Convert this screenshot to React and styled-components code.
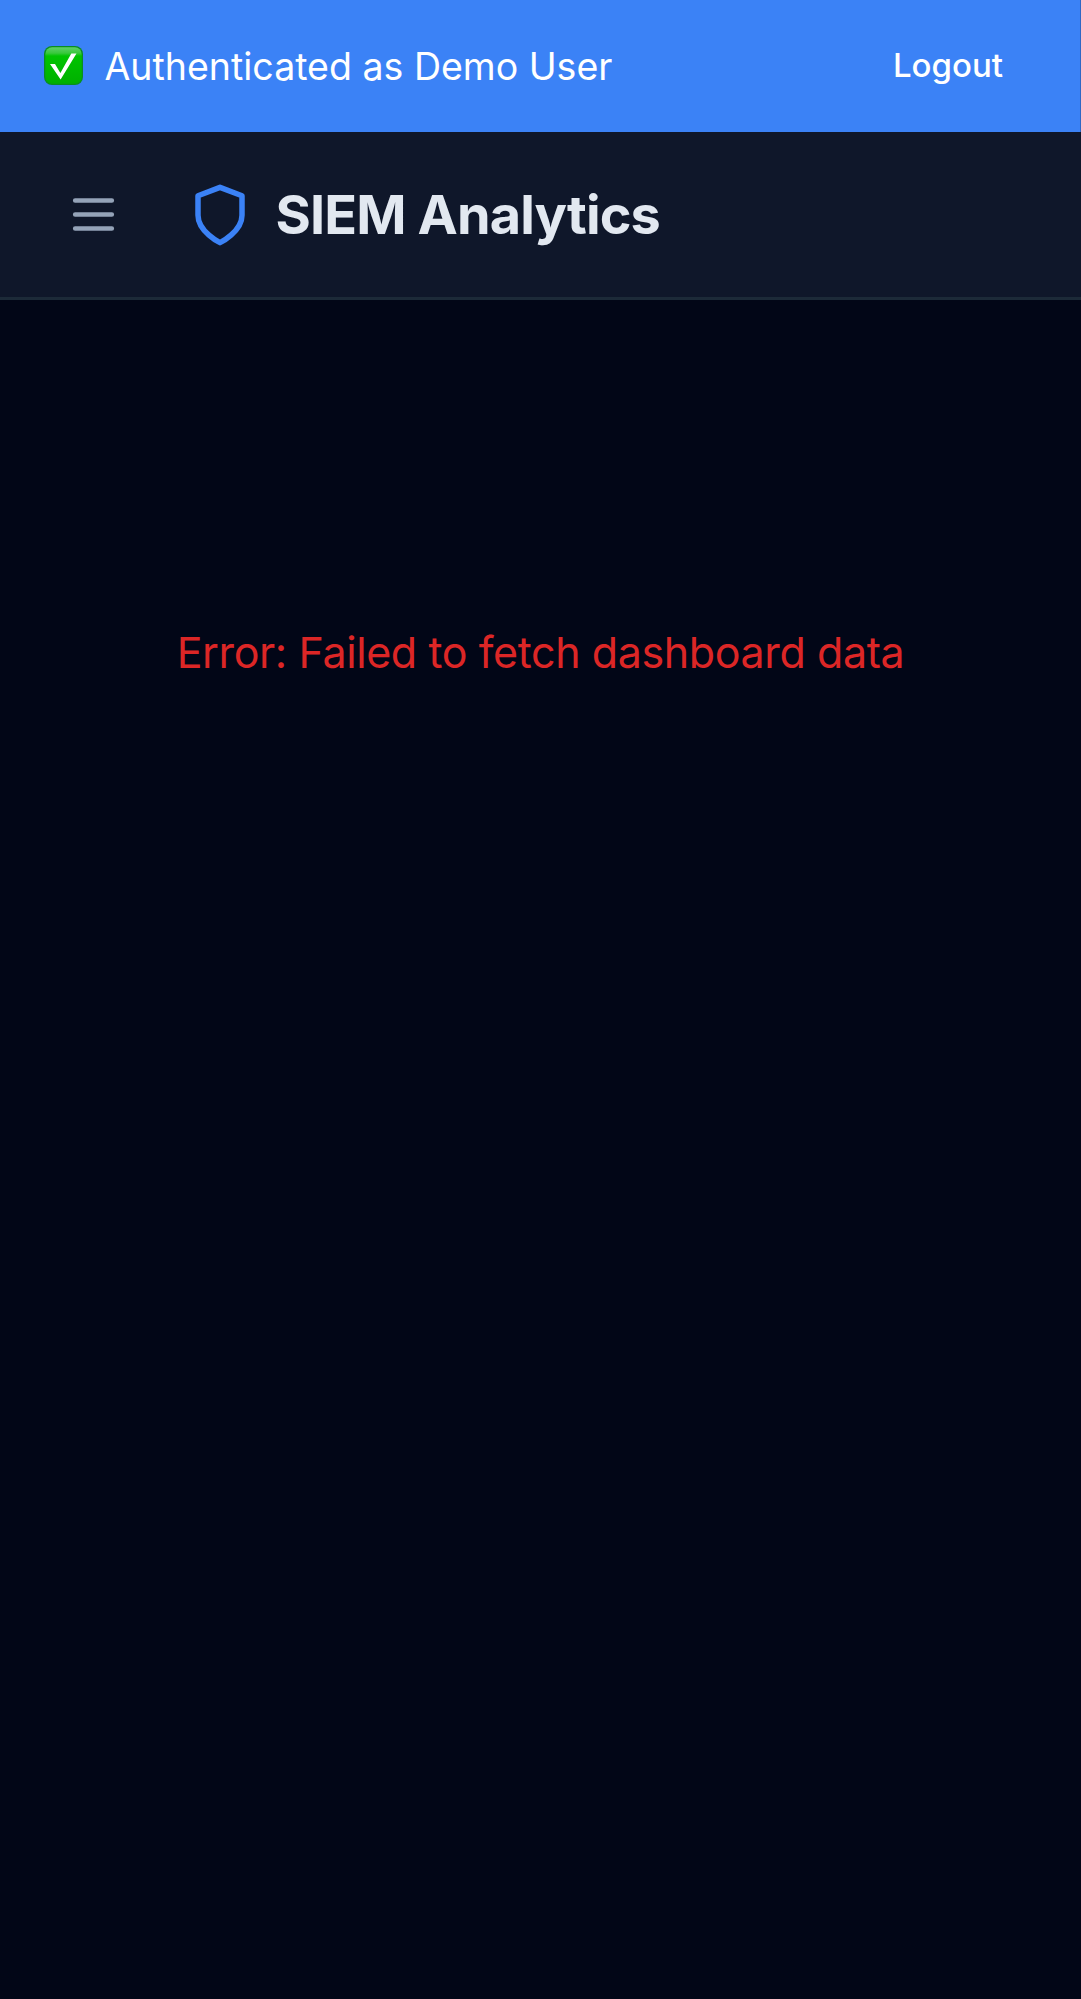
import React from "react";
import styled, { createGlobalStyle } from "styled-components";

const GlobalStyle = createGlobalStyle`
  *, *::before, *::after { box-sizing: border-box; }
  body {
    margin: 0;
    background: #020617;
    font-family: Inter, "Liberation Sans", sans-serif;
  }
`;

const Page = styled.div`
  min-height: 1999px;
  display: flex;
  flex-direction: column;
  background: #020617;
`;

const AuthBanner = styled.div`
  height: 132px;
  padding: 0 77px 0 44px;
  display: flex;
  align-items: center;
  justify-content: space-between;
  background: #3b82f6;
  border-right: 1px solid #2f67c4;
  color: #fff;
`;

const AuthStatus = styled.div`
  display: flex;
  align-items: center;
  gap: 21.5px;

  svg { margin-bottom: 2px; }
`;

const AuthText = styled.span`
  padding-top: 2px;
  font-size: 37.5px;
  line-height: 54px;
  white-space: nowrap;
`;

const LogoutButton = styled.button`
  border: 0;
  padding: 0 0 2px;
  background: none;
  color: #fff;
  font: 500 33px/44px Inter, "Liberation Sans", sans-serif;
`;

const Header = styled.header`
  height: 168px;
  padding: 0 66px;
  display: flex;
  align-items: center;
  background: #0f172a;
  border-bottom: 3px solid #1c2a38;
`;

const MenuButton = styled.button`
  display: flex;
  border: 0;
  padding: 0;
  margin-right: 66px;
  background: none;
  color: #94a3b8;
`;

const Brand = styled.div`
  display: flex;
  align-items: center;
  gap: 22.5px;
  color: #3b82f6;
`;

const Title = styled.h1`
  margin: 0;
  font-size: 54px;
  line-height: 77px;
  font-weight: 700;
  letter-spacing: -0.88px;
  color: #e2e8f0;
  white-space: nowrap;
`;

const Main = styled.main`
  flex: 1;
  display: flex;
  justify-content: center;
  align-items: flex-start;
  padding-top: 319px;
`;

const ErrorMessage = styled.p`
  margin: 0;
  font-size: 43px;
  line-height: 66px;
  letter-spacing: -0.4px;
  color: #dc2626;
  white-space: nowrap;
`;

const CheckIcon = () => (
  <svg width="39" height="39" viewBox="0 0 39 39">
    <defs>
      <linearGradient id="face" x1="0" y1="0" x2="0" y2="1">
        <stop offset="0" stopColor="#5fd068" />
        <stop offset="0.16" stopColor="#38c83c" />
        <stop offset="0.24" stopColor="#00c400" />
        <stop offset="1" stopColor="#00b000" />
      </linearGradient>
    </defs>
    <rect width="39" height="39" rx="8" fill="#098e20" />
    <rect x="1.3" y="1.3" width="36.4" height="36.4" rx="6.8" fill="url(#face)" />
    <path d="M6 18h5l5.4 9L27.3 7.4h5.2L16.6 33.6z" fill="#fff" />
  </svg>
);

const MenuIcon = () => (
  <svg width="55" height="55" viewBox="0 0 24 24" fill="none" stroke="currentColor" strokeWidth="2" strokeLinecap="round">
    <path d="M4 5.9h16M4 12h16M4 18.1h16" />
  </svg>
);

const ShieldIcon = () => (
  <svg width="66" height="66" viewBox="0 0 24 24" fill="none" stroke="currentColor" strokeWidth="2" strokeLinecap="round" strokeLinejoin="round">
    <path d="M12 22.05s8-4 8-10V5l-8-3.05L4 5v7.05c0 6 8 10 8 10z" />
  </svg>
);

export default function App() {
  return (
    <>
      <GlobalStyle />
      <Page>
        <AuthBanner>
          <AuthStatus>
            <CheckIcon />
            <AuthText>Authenticated as Demo User</AuthText>
          </AuthStatus>
          <LogoutButton>Logout</LogoutButton>
        </AuthBanner>
        <Header>
          <MenuButton aria-label="Menu">
            <MenuIcon />
          </MenuButton>
          <Brand>
            <ShieldIcon />
            <Title>SIEM Analytics</Title>
          </Brand>
        </Header>
        <Main>
          <ErrorMessage>Error: Failed to fetch dashboard data</ErrorMessage>
        </Main>
      </Page>
    </>
  );
}
